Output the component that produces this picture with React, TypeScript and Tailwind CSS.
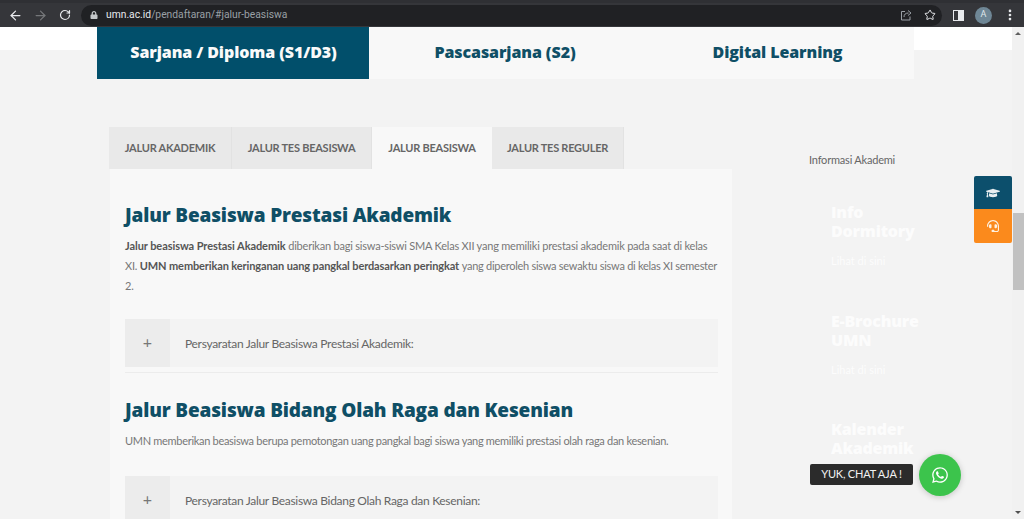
import { ArrowLeft, ArrowRight, RotateCw, Star, MoreVertical } from 'lucide-react'
import { FaWhatsapp, FaGraduationCap, FaHeadset, FaLock } from 'react-icons/fa'

const lato = "font-['Lato',sans-serif]"
const open = "font-['Open_Sans',sans-serif]"

function ChromeBar() {
  return (
    <div className="h-[27px] bg-[#35363a] flex items-center shrink-0 border-t-[3px] border-[#2f3034]">
      <div className="w-[81px] flex items-center pl-[8px] gap-[10px] text-[#e8eaed]">
        <ArrowLeft size={15} strokeWidth={2} />
        <ArrowRight size={15} strokeWidth={2} className="text-[#75777a]" />
        <RotateCw size={12} strokeWidth={2.4} className="ml-[1px]" />
      </div>
      <div className="w-[861px] h-[21px] rounded-full bg-[#202124] flex items-center pl-[9px] pr-[6px]">
        <FaLock size={8} className="text-[#c4c7c9]" />
        <span className="ml-[8px] text-[10.3px] text-[#e8eaed] font-['Roboto',sans-serif]">
          umn.ac.id<span className="text-[#9aa0a6]">/pendaftaran/#jalur-beasiswa</span>
        </span>
        <div className="ml-auto flex items-center gap-[12px] text-[#d5d7da]">
          <svg width="12" height="12" viewBox="0 0 12 12" fill="none" stroke="#9aa0a6" strokeWidth="1">
            <path d="M5 2.5H1.5V11H10V7.5" />
            <path d="M4 8c0-2.5 1.5-4 4.5-4M8 1.5L11 4 8 6.5" />
          </svg>
          <Star size={12} strokeWidth={2} className="text-[#e8eaed]" />
        </div>
      </div>
      <div className="flex-1 flex items-center pl-[11px] gap-[11px] text-[#e8eaed]">
        <div className="w-[11px] h-[11px] border-[1.5px] border-[#e8eaed] flex justify-end">
          <div className="w-[5px] h-full bg-[#e8eaed]" />
        </div>
        <div className="w-[17px] h-[17px] rounded-full bg-[#6f8796] text-[9px] flex items-center justify-center font-['Roboto',sans-serif] text-[#dfe6ea]">
          A
        </div>
        <MoreVertical size={14} strokeWidth={2.6} />
      </div>
    </div>
  )
}

function Accordion({ label }: { label: string }) {
  return (
    <div className="flex h-[48px] bg-[#f3f3f3] shrink-0">
      <div className="w-[45px] bg-[#ececec] flex items-center justify-center text-[16px] text-[#777] font-['Lato',sans-serif] pb-[3px]">
        +
      </div>
      <div className={`pl-[15px] flex items-center text-[12px] tracking-[-0.31px] text-[#666] pt-[1px] ${lato}`}>{label}</div>
    </div>
  )
}

function SideCard({ title, second }: { title: string; second: string }) {
  return (
    <div className="pl-[22px] mb-[43.5px]">
      <div className={`text-[16px] leading-[19px] font-extrabold tracking-[-0.2px] text-[#fcfcfc] ${open}`}>
        {title}
        <br />
        {second}
      </div>
      <div className={`mt-[13px] text-[11px] leading-[14px] text-[#fcfcfc] ${lato}`}>Lihat di sini</div>
    </div>
  )
}

export default function App() {
  const tabs = [
    { label: 'JALUR AKADEMIK', w: 'w-[123px]' },
    { label: 'JALUR TES BEASISWA', w: 'w-[140px]' },
    { label: 'JALUR BEASISWA', w: 'w-[120px]', active: true },
    { label: 'JALUR TES REGULER', w: 'w-[132px]' },
  ]

  return (
    <div className="w-[1024px] h-[519px] overflow-hidden flex flex-col bg-[#f3f3f3]">
      <ChromeBar />
      <div className="flex flex-1 min-h-0">
        <div className="relative w-[1012px] overflow-hidden">
          <div className="h-[23px] bg-white" />
          {/* program tabs */}
          <div className={`-mt-[23px] ml-[97px] w-[817px] h-[52px] bg-[#f8f8f8] flex text-[16px] font-extrabold tracking-[-0.1px] ${open}`}>
            <div className="w-[272px] bg-[#014f6b] text-[#fafafa] flex items-center justify-center pb-[3px] pl-[1px]">
              Sarjana / Diploma (S1/D3)
            </div>
            <div className="w-[272px] text-[#0f4f66] flex items-center justify-center pb-[3px]">
              Pascasarjana (S2)
            </div>
            <div className="w-[273px] text-[#0f4f66] flex items-center justify-center pb-[3px]">
              Digital Learning
            </div>
          </div>

          <div className="flex mt-[48px] pl-[109px]">
            <div className="w-[623px] shrink-0">
              <div className={`flex h-[42px] ${lato}`}>
                {tabs.map((t) => (
                  <div
                    key={t.label}
                    className={`${t.w} flex items-center justify-center text-[11px] tracking-[-0.25px] font-bold text-[#666] ${
                      t.active ? 'bg-[#f8f8f8]' : 'bg-[#e9e9e9] border-r border-[#e2e2e2]'
                    }`}
                  >
                    {t.label}
                  </div>
                ))}
              </div>
              <div className="ml-[1px] bg-[#f8f8f8] pl-[15px] pr-[14px] h-[350px]">
                <h2 className={`pt-[33px] text-[19px] leading-[27px] font-extrabold tracking-[-0.16px] text-[#0f4f66] ${open}`}>
                  Jalur Beasiswa Prestasi Akademik
                </h2>
                <p className={`mt-[7px] text-[11px] tracking-[-0.21px] leading-[20px] text-[#777] ${lato}`}>
                  <b className="text-[#555] tracking-[-0.07px]">Jalur beasiswa Prestasi Akademik</b> diberikan bagi
                  siswa-siswi SMA Kelas XII yang memiliki prestasi akademik pada saat di kelas
                  <br />
                  XI.{' '}
                  <b className="text-[#555] tracking-[-0.12px]">
                    UMN memberikan keringanan uang pangkal berdasarkan peringkat
                  </b>{' '}
                  <span className="tracking-[-0.27px]">yang diperoleh siswa sewaktu siswa di kelas XI semester</span>
                  <br />
                  2.
                </p>
                <div className="mt-[23px]">
                  <Accordion label="Persyaratan Jalur Beasiswa Prestasi Akademik:" />
                </div>
                <div className="mt-[5px] border-t border-[#ececec]" />
                <h2 className={`mt-[24px] text-[19px] leading-[27px] font-extrabold tracking-[-0.16px] text-[#0f4f66] ${open}`}>
                  Jalur Beasiswa Bidang Olah Raga dan Kesenian
                </h2>
                <p className={`mt-[7px] text-[11px] tracking-[-0.3px] leading-[20px] text-[#777] ${lato}`}>
                  UMN memberikan beasiswa berupa pemotongan uang pangkal bagi siswa yang memiliki prestasi olah raga dan
                  kesenian.
                </p>
                <div className="mt-[25px]">
                  <Accordion label="Persyaratan Jalur Beasiswa Bidang Olah Raga dan Kesenian:" />
                </div>
              </div>
            </div>
            <div className="ml-[77px] flex-1">
              <div className={`mt-[26px] text-[11px] tracking-[-0.2px] leading-[14px] text-[#666] ${lato}`}>Informasi Akademi</div>
              <div className="mt-[36px]">
                <SideCard title="Info" second="Dormitory" />
                <SideCard title="E-Brochure" second="UMN" />
                <SideCard title="Kalender" second="Akademik" />
              </div>
            </div>
          </div>

          {/* floating buttons */}
          <div className="absolute right-0 top-[149px] w-[38px] rounded-[2px] overflow-hidden">
            <div className="h-[33px] bg-[#0c4f6c] flex items-center justify-center text-[#e8eef1]">
              <FaGraduationCap size={14} />
            </div>
            <div className="h-[34px] bg-[#fb8a1c] flex items-center justify-center text-[#fdf0e0]">
              <FaHeadset size={12} />
            </div>
          </div>
          <div
            className={`absolute left-[810px] top-[437px] w-[103px] h-[21px] rounded-[2px] bg-[#2b2b2b] text-[#f2f2f2] text-[11px] tracking-[-0.2px] flex items-center justify-center ${lato}`}
          >
            YUK, CHAT AJA !
          </div>
          <div className="absolute left-[919px] top-[427px] w-[42px] h-[42px] rounded-full bg-[#3cc44c] shadow-[0_1px_6px_rgba(0,0,0,0.2)] flex items-center justify-center text-white">
            <FaWhatsapp size={18} />
          </div>
        </div>

        {/* scrollbar */}
        <div className="w-[12px] bg-[#f1f1f1] flex flex-col items-center justify-between py-[5px] relative">
          <div className="w-0 h-0 border-x-[3px] border-x-transparent border-b-[3px] border-b-[#606060]" />
          <div className="absolute top-[186px] left-[1px] w-[11px] h-[77px] bg-[#c1c1c1]" />
          <div className="w-0 h-0 border-x-[3px] border-x-transparent border-t-[3px] border-t-[#505050]" />
        </div>
      </div>
    </div>
  )
}
